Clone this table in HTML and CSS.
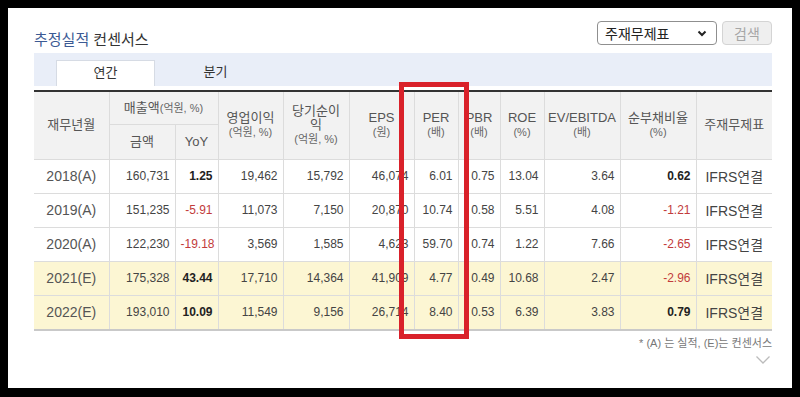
FILE: index.html
```html
<!DOCTYPE html>
<html lang="ko">
<head>
    <meta charset="UTF-8">
    <meta name="viewport" content="width=device-width, initial-scale=1.0">
    <title>추정실적 컨센서스</title>
    <link rel="stylesheet" href="styles.css">
</head>
<body>
    <div class="panel">
        <div class="panel-head">
            <h2 class="title"><span class="title-em">추정실적</span> 컨센서스</h2>
            <div class="search">
                <div class="select-box">
                    <span>주재무제표</span>
                    <svg width="10" height="7" viewBox="0 0 10 7"><path d="M1.5 1.5 L5 5 L8.5 1.5" fill="none" stroke="#222" stroke-width="2"/></svg>
                </div>
                <button class="search-btn" disabled>검색</button>
            </div>
        </div>

        <div class="tabs">
            <div class="tab active">연간</div>
            <div class="tab">분기</div>
        </div>

        <table class="cons-table">
            <colgroup>
                <col style="width:75px"><col style="width:66px"><col style="width:43px">
                <col style="width:65px"><col style="width:66px"><col style="width:65px">
                <col style="width:44px"><col style="width:42px"><col style="width:44px">
                <col style="width:76px"><col style="width:76px"><col style="width:76px">
            </colgroup>
            <thead>
                <tr class="head-top">
                    <th rowspan="2">재무년월</th>
                    <th colspan="2">매출액<span class="unit-inline">(억원, %)</span></th>
                    <th rowspan="2">영업이익<br><span class="unit">(억원, %)</span></th>
                    <th rowspan="2">당기순이<br>익<br><span class="unit">(억원, %)</span></th>
                    <th rowspan="2">EPS<br><span class="unit">(원)</span></th>
                    <th rowspan="2">PER<br><span class="unit">(배)</span></th>
                    <th rowspan="2">PBR<br><span class="unit">(배)</span></th>
                    <th rowspan="2">ROE<br><span class="unit">(%)</span></th>
                    <th rowspan="2">EV/EBITDA<br><span class="unit">(배)</span></th>
                    <th rowspan="2">순부채비율<br><span class="unit">(%)</span></th>
                    <th rowspan="2">주재무제표</th>
                </tr>
                <tr class="head-sub">
                    <th>금액</th>
                    <th>YoY</th>
                </tr>
            </thead>
            <tbody>
                <tr>
                    <td class="year">2018(A)</td>
                    <td>160,731</td><td class="strong">1.25</td><td>19,462</td><td>15,792</td><td>46,074</td>
                    <td>6.01</td><td>0.75</td><td>13.04</td><td>3.64</td><td class="strong">0.62</td>
                    <td class="std">IFRS연결</td>
                </tr>
                <tr>
                    <td class="year">2019(A)</td>
                    <td>151,235</td><td class="minus">-5.91</td><td>11,073</td><td>7,150</td><td>20,870</td>
                    <td>10.74</td><td>0.58</td><td>5.51</td><td>4.08</td><td class="minus">-1.21</td>
                    <td class="std">IFRS연결</td>
                </tr>
                <tr>
                    <td class="year">2020(A)</td>
                    <td>122,230</td><td class="minus">-19.18</td><td>3,569</td><td>1,585</td><td>4,623</td>
                    <td>59.70</td><td>0.74</td><td>1.22</td><td>7.66</td><td class="minus">-2.65</td>
                    <td class="std">IFRS연결</td>
                </tr>
                <tr class="estimate">
                    <td class="year">2021(E)</td>
                    <td>175,328</td><td class="strong">43.44</td><td>17,710</td><td>14,364</td><td>41,909</td>
                    <td>4.77</td><td>0.49</td><td>10.68</td><td>2.47</td><td class="minus">-2.96</td>
                    <td class="std">IFRS연결</td>
                </tr>
                <tr class="estimate">
                    <td class="year">2022(E)</td>
                    <td>193,010</td><td class="strong">10.09</td><td>11,549</td><td>9,156</td><td>26,714</td>
                    <td>8.40</td><td>0.53</td><td>6.39</td><td>3.83</td><td class="strong">0.79</td>
                    <td class="std">IFRS연결</td>
                </tr>
            </tbody>
        </table>

        <p class="note">* (A) 는 실적, (E)는 컨센서스</p>
        <div class="more">
            <svg width="14" height="8" viewBox="0 0 14 8"><path d="M0.5 0.5 L7 7 L13.5 0.5" fill="none" stroke="#bbb" stroke-width="1.3"/></svg>
        </div>

        <!-- highlight around PER column -->
        <div class="highlight"></div>
    </div>
</body>
</html>
```

FILE: styles.css
```css
body {
    margin: 0;
    padding: 8px;
    background-color: #000;
    font-family: "Liberation Sans", "Noto Sans CJK KR", sans-serif;
    color: #333;
}

.panel {
    position: relative;
    height: 380px;
    background-color: #fff;
    padding: 0 20px 0 26px;
    overflow: hidden;
}

.panel-head {
    display: flex;
    justify-content: space-between;
    align-items: flex-start;
    height: 32px;
    padding-top: 13px;
    box-sizing: content-box;
}

.title {
    margin: 9px 0 0 0;
    font-size: 15px;
    line-height: 20px;
    font-weight: normal;
    color: #333;
}

.title-em {
    color: #3c5a94;
}

.search {
    display: flex;
    gap: 5px;
}

.select-box {
    display: flex;
    align-items: center;
    justify-content: space-between;
    width: 120px;
    height: 24px;
    box-sizing: border-box;
    padding: 0 9px 0 7px;
    border: 1px solid #8f8f8f;
    border-radius: 4px;
    font-size: 14px;
    color: #222;
}

.search-btn {
    width: 50px;
    height: 24px;
    padding: 0;
    border: 1px solid #d4d4d4;
    border-radius: 4px;
    background-color: #efefef;
    color: #a6a6a6;
    font-family: inherit;
    font-size: 14px;
}

.tabs {
    display: flex;
    align-items: flex-end;
    height: 33px;
    padding-left: 22px;
    background-color: #e9eef8;
}

.tab {
    width: 99px;
    height: 26px;
    box-sizing: border-box;
    font-size: 13px;
    line-height: 24px;
    text-align: center;
    color: #333;
}

.tab.active {
    background-color: #fff;
    border: 1px solid #d6dbe4;
    border-bottom: none;
}

.tab + .tab {
    margin-left: 11px;
}

.cons-table {
    width: 738px;
    margin-top: 4px;
    table-layout: fixed;
    border-collapse: collapse;
    border-top: 2px solid #333;
    border-bottom: 2px solid #c9c9c9;
}

.cons-table th {
    background-color: #f2f2f2;
    border: 1px solid #dcdcdc;
    border-top: none;
    font-size: 13px;
    font-weight: normal;
    line-height: 14px;
    color: #555;
    padding: 0;
    text-align: center;
}

.cons-table th:first-child {
    border-left: none;
}

.cons-table th:last-child {
    border-right: none;
}

.head-top {
    height: 33px;
}

.head-sub {
    height: 35px;
}

.head-sub th:first-child {
    border-left: 1px solid #dcdcdc;
}

.unit {
    font-size: 11px;
    color: #666;
}

.unit-inline {
    font-size: 11px;
    color: #666;
}

.cons-table td {
    height: 33px;
    padding: 0 5px;
    border: 1px solid #dcdcdc;
    font-size: 12px;
    text-align: right;
    color: #444;
}

.cons-table td:first-child {
    border-left: none;
}

.cons-table td:last-child {
    border-right: none;
}

.cons-table td.year {
    text-align: center;
    font-size: 14px;
    color: #555;
}

.cons-table td.std {
    text-align: center;
    font-size: 14px;
    color: #444;
}

.cons-table td.strong {
    color: #222;
    font-weight: bold;
}

.cons-table td.minus {
    color: #c23b3b;
}

.estimate td {
    background-color: #fcf6d3;
}

.note {
    margin: 5px 0 0 0;
    font-size: 11px;
    line-height: 14px;
    text-align: right;
    color: #777;
}

.more {
    display: flex;
    justify-content: flex-end;
    padding: 6px 2px 0 0;
}

.highlight {
    position: absolute;
    left: 391px;
    top: 74px;
    width: 70px;
    height: 257px;
    box-sizing: border-box;
    border: 5px solid #d9212a;
}
```
